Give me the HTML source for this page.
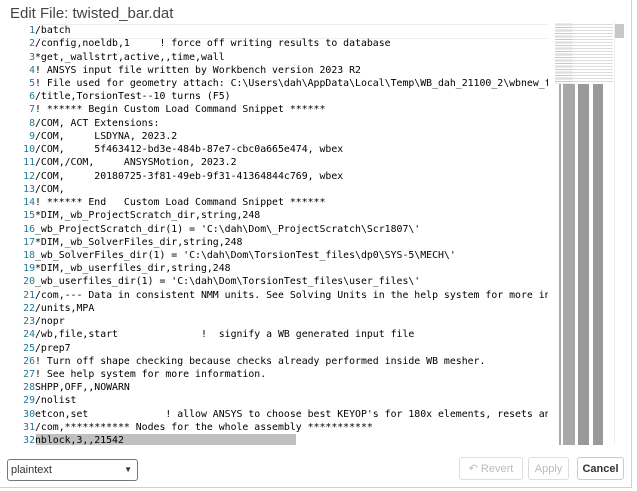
<!DOCTYPE html><html><head><style>
body{margin:0;width:637px;height:491px;background:#fff;font-family:"Liberation Sans",sans-serif;overflow:hidden;position:relative}
.dlg{position:absolute;left:0;top:0;width:631px;height:487px;border:1px solid #d0d0d0;border-top:none;border-left:none}
.title{position:absolute;left:10px;top:5px;font-size:15px;color:#444}
.ed{position:absolute;left:0;top:22px;width:548px;height:423px;overflow:hidden}
.l{position:absolute;left:0;height:13.23px;white-space:pre;font-family:"DejaVu Sans Mono",monospace;font-size:9.85px;line-height:13.23px;color:#000}
.n{display:inline-block;width:35px;text-align:right;color:#237893}
.cur{position:absolute;left:35px;top:2px;width:513px;height:13px;border-top:1px solid #eee;border-bottom:1px solid #eee}
.sel{position:absolute;left:36px;top:412px;width:260px;height:11px;background:#c0c0c0}
.mm{position:absolute;left:555px;top:22px;width:60px;height:423px}
.btn{position:absolute;top:457px;height:23px;border:1px solid #ddd;border-radius:3px;font-size:11px;color:#bbb;text-align:center;line-height:23px;box-sizing:border-box}
</style></head><body><div class="dlg"></div>
<div class="title">Edit File: twisted_bar.dat</div>
<div class="ed"><div class="cur"></div><div class="sel"></div>
<div class="l" style="top:2px"><span class="n">1</span>/batch</div>
<div class="l" style="top:15.2px"><span class="n">2</span>/config,noeldb,1     ! force off writing results to database</div>
<div class="l" style="top:28.5px"><span class="n">3</span>*get,_wallstrt,active,,time,wall</div>
<div class="l" style="top:41.7px"><span class="n">4</span>! ANSYS input file written by Workbench version 2023 R2</div>
<div class="l" style="top:54.9px"><span class="n">5</span>! File used for geometry attach: C:\Users\dah\AppData\Local\Temp\WB_dah_21100_2\wbnew_f</div>
<div class="l" style="top:68.2px"><span class="n">6</span>/title,TorsionTest--10 turns (F5)</div>
<div class="l" style="top:81.4px"><span class="n">7</span>! ****** Begin Custom Load Command Snippet ******</div>
<div class="l" style="top:94.6px"><span class="n">8</span>/COM, ACT Extensions:</div>
<div class="l" style="top:107.8px"><span class="n">9</span>/COM,     LSDYNA, 2023.2</div>
<div class="l" style="top:121.1px"><span class="n">10</span>/COM,     5f463412-bd3e-484b-87e7-cbc0a665e474, wbex</div>
<div class="l" style="top:134.3px"><span class="n">11</span>/COM,/COM,     ANSYSMotion, 2023.2</div>
<div class="l" style="top:147.5px"><span class="n">12</span>/COM,     20180725-3f81-49eb-9f31-41364844c769, wbex</div>
<div class="l" style="top:160.8px"><span class="n">13</span>/COM,</div>
<div class="l" style="top:174px"><span class="n">14</span>! ****** End   Custom Load Command Snippet ******</div>
<div class="l" style="top:187.2px"><span class="n">15</span>*DIM,_wb_ProjectScratch_dir,string,248</div>
<div class="l" style="top:200.5px"><span class="n">16</span>_wb_ProjectScratch_dir(1) = 'C:\dah\Dom\_ProjectScratch\Scr1807\'</div>
<div class="l" style="top:213.7px"><span class="n">17</span>*DIM,_wb_SolverFiles_dir,string,248</div>
<div class="l" style="top:226.9px"><span class="n">18</span>_wb_SolverFiles_dir(1) = 'C:\dah\Dom\TorsionTest_files\dp0\SYS-5\MECH\'</div>
<div class="l" style="top:240.1px"><span class="n">19</span>*DIM,_wb_userfiles_dir,string,248</div>
<div class="l" style="top:253.4px"><span class="n">20</span>_wb_userfiles_dir(1) = 'C:\dah\Dom\TorsionTest_files\user_files\'</div>
<div class="l" style="top:266.6px"><span class="n">21</span>/com,--- Data in consistent NMM units. See Solving Units in the help system for more in</div>
<div class="l" style="top:279.8px"><span class="n">22</span>/units,MPA</div>
<div class="l" style="top:293.1px"><span class="n">23</span>/nopr</div>
<div class="l" style="top:306.3px"><span class="n">24</span>/wb,file,start              !  signify a WB generated input file</div>
<div class="l" style="top:319.5px"><span class="n">25</span>/prep7</div>
<div class="l" style="top:332.8px"><span class="n">26</span>! Turn off shape checking because checks already performed inside WB mesher.</div>
<div class="l" style="top:346px"><span class="n">27</span>! See help system for more information.</div>
<div class="l" style="top:359.2px"><span class="n">28</span>SHPP,OFF,,NOWARN</div>
<div class="l" style="top:372.4px"><span class="n">29</span>/nolist</div>
<div class="l" style="top:385.7px"><span class="n">30</span>etcon,set             ! allow ANSYS to choose best KEYOP's for 180x elements, resets any</div>
<div class="l" style="top:398.9px"><span class="n">31</span>/com,*********** Nodes for the whole assembly ***********</div>
<div class="l" style="top:412.1px"><span class="n">32</span>nblock,3,,21542</div>
</div>
<div class="mm">
<div style="position:absolute;left:0;top:0;width:58px;height:62px;background:repeating-linear-gradient(#fff 0 1px,#ccc 1px 2px);opacity:.8;clip-path:polygon(0 0,30% 0,30% 100%,0 100%)"></div>
<div style="position:absolute;left:0;top:0;width:58px;height:62px;background:repeating-linear-gradient(#fff 0 2px,#bbb 2px 3px);opacity:.5"></div>
<div style="position:absolute;left:4px;top:62px;width:2px;height:361px;background:#aaa"></div>
<div style="position:absolute;left:8px;top:62px;width:12px;height:361px;background:#a8a8a8"></div>
<div style="position:absolute;left:23px;top:62px;width:11px;height:361px;background:#999"></div>
<div style="position:absolute;left:38px;top:62px;width:10px;height:361px;background:#9a9a9a"></div>
</div>
<div style="position:absolute;left:614px;top:22px;width:1px;height:423px;background:#eee"></div>
<div style="position:absolute;left:615px;top:24px;width:9px;height:14px;background:#c8c8c8"></div>
<div style="position:absolute;left:7px;top:459px;width:131px;height:22px;border:1px solid #777;border-radius:3px;box-sizing:border-box;font-size:11px;line-height:20px;padding-left:3px;color:#333">plaintext<span style="position:absolute;right:5px;top:0;font-size:8px">▼</span></div>
<div class="btn" style="left:459px;width:64px">↶ Revert</div>
<div class="btn" style="left:528px;width:41px">Apply</div>
<div class="btn" style="left:577px;width:47px;color:#333;font-weight:bold;border-color:#ccc">Cancel</div>
</body></html>
